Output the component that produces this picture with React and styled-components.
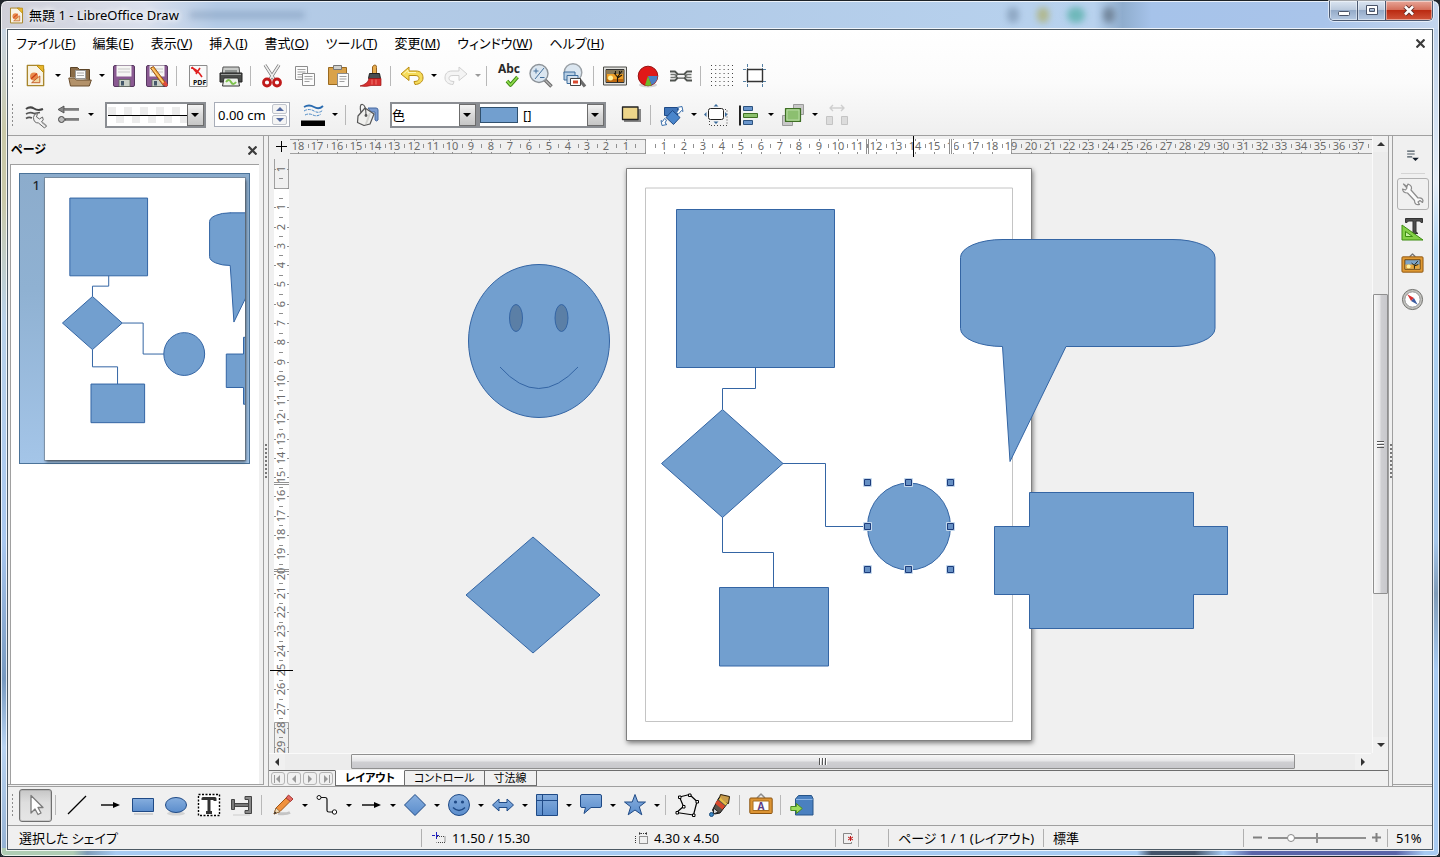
import React from "react";
import styled, { createGlobalStyle, css } from "styled-components";

const GlobalStyle = createGlobalStyle`
  *, *::before, *::after { box-sizing: border-box; }
  html, body { margin: 0; height: 100%; }
  body {
    background: #20262c;
    font-family: "Noto Sans", "Noto Sans CJK JP", sans-serif;
    font-feature-settings: "palt";
    font-size: 13px;
    line-height: 16px;
    color: #000;
    overflow: hidden;
  }
  button, select, input { font: inherit; font-feature-settings: inherit; color: inherit; }
  button { border: 0; padding: 0; background: none; }
  svg { display: block; }
`;

/* ---------- window frame ---------- */

const Frame = styled.div`
  display: flex;
  flex-direction: column;
  height: 100vh;
  padding: 0 6px 6px;
  border: 1px solid #1c2228;
  border-radius: 7px 7px 5px 5px;
  box-shadow: inset 0 0 0 1px rgba(255, 255, 255, 0.75);
  background:
    linear-gradient(90deg, #b0ccb4 0 5%, #7f9cb8 6%, #a7cbf2 8%, #a7cbf2 79%, #44546a 80% 83%, #a7cbf2 85%, #5a64a8 87% 97%, #a7cbf2 99%) bottom / 100% 8px no-repeat,
    linear-gradient(#c8d4e2, #c9c9a8 12%, #c9c9a8 20%, #b9d2ea 34%, #a9c8f0 60%, #7799c0 76%, #b9d4f2 84%, #88a6c8 100%) left 28px / 8px 100% no-repeat,
    linear-gradient(#bcd0ea, #e4edf7 18%, #b0d6f6 26%, #a4c6ea 60%, #7f9cb8 66%, #a8cbf2 75%) right 28px / 8px 100% no-repeat,
    linear-gradient(90deg, #cfcfd8, #d9dfec 10%, #b4cbe6 15%, #b0c9e6 40%, #b8d2ee 76%, #8fadce 78%, #a6c3ea 80%, #a9c4ea 92%, #c4d6ee);
`;

const TitleBar = styled.header`
  display: flex;
  align-items: center;
  height: 28px;
  flex: none;
  padding-left: 1px;
`;

const Title = styled.h1`
  margin: 0 10px 0 4px;
  font-size: 13px;
  font-weight: 400;
  text-shadow: 0 0 6px #fff, 0 0 6px #fff;
`;

const Blob = styled.span`
  width: ${(p) => p.$w}px;
  height: ${(p) => p.$h || 16}px;
  margin-right: 18px;
  border-radius: 8px;
  filter: blur(3px);
  background: ${(p) => p.$c};
`;

const Fill = styled.span`
  flex: 1;
`;

const Caption = styled.div`
  display: flex;
  align-self: flex-start;
  margin-left: 196px;
  height: 20px;
  border: 1px solid #4a5870;
  border-top: 0;
  border-radius: 0 0 5px 5px;
  box-shadow: 0 0 0 1px rgba(255, 255, 255, 0.6);
  overflow: hidden;
`;

const CaptionButton = styled.button`
  display: grid;
  place-items: center;
  width: ${(p) => (p.$close ? 46 : 28)}px;
  border-right: 1px solid #4a5870;
  box-shadow: inset 0 0 0 1px rgba(255, 255, 255, 0.45);
  background: ${(p) =>
    p.$close
      ? "linear-gradient(#e8a698, #d4705c 45%, #bb2b12 50%, #d0543a)"
      : "linear-gradient(#dbe5f1, #bccbde 45%, #95abc8 50%, #b5c9e2)"};
  &:last-child { border-right: 0; }
`;

const Client = styled.div`
  display: flex;
  flex-direction: column;
  flex: 1;
  min-height: 0;
  border: 1px solid #4c5964;
  outline: 1px solid rgba(255, 255, 255, 0.8);
  background: #f0f0f0;
`;

const TopBars = styled.div`
  flex: none;
  height: 106px;
  background: linear-gradient(#fff, #fbfbfb 50%, #efefef);
  border-bottom: 1px solid #a0a0a0;
`;

const MenuBar = styled.nav`
  display: flex;
  align-items: center;
  height: 26px;
  padding: 0 6px 0 8px;
  gap: 17px;
`;

const MenuItem = styled.button`
  white-space: nowrap;
`;

const CloseButton = styled.button`
  display: grid;
  place-items: center;
  width: 12px;
  height: 16px;
  margin-left: auto;
`;

/* ---------- toolbars ---------- */

const Toolbar = styled.div`
  display: flex;
  align-items: center;
  flex: none;
  height: 39px;
  padding-left: 3px;
  ${(p) => p.$line && css`padding-bottom: 2px; border-bottom: 1px solid #a0a0a0;`}
`;

const Grip = styled.span`
  width: 3px;
  height: 22px;
  margin-right: 5px;
  background: repeating-linear-gradient(#8c8c8c 0 2px, transparent 2px 4px) 1px 0 / 1px 100% no-repeat;
`;

const ToolButton = styled.button`
  display: grid;
  place-items: center;
  flex: none;
  width: 33px;
  height: 33px;
  ${(p) =>
    p.$on &&
    css`
      border: 1px solid #6f6f6f;
      border-radius: 3px;
      background: linear-gradient(#c6c6c6, #dedede 40%, #e6e6e6);
      box-shadow: inset 0 0 0 1px rgba(120, 120, 120, 0.25);
    `}
`;

const ArrowButton = styled.button`
  display: grid;
  place-items: center;
  width: 11px;
  height: 33px;
  &::after {
    content: "";
    border: 3px solid transparent;
    border-top-color: ${(p) => (p.$off ? "#9a9a9a" : "#000")};
    border-bottom: 0;
  }
`;

const Divider = styled.span`
  width: 1px;
  height: 20px;
  margin: 0 4px 0 3px;
  background: #b8b8b8;
`;

const Combo = styled.label`
  display: grid;
  grid-template-columns: 1fr 17px;
  align-items: stretch;
  width: ${(p) => p.$w}px;
  height: 26px;
  border: 2px solid #8a8d92;
  background: #fff;
  position: relative;
  &::after {
    content: "";
    border: 1px solid #6c6c6c;
    background: linear-gradient(#f4f4f4, #d8d8d8 50%, #c6c6c6);
  }
`;

const ComboArrow = styled.i`
  position: absolute;
  right: 5px;
  top: 9px;
  border: 4px solid transparent;
  border-top-color: #000;
  border-bottom: 0;
  pointer-events: none;
`;

const ComboValue = styled.span`
  display: flex;
  align-items: center;
  min-width: 0;
`;

const Select = styled.select`
  appearance: none;
  flex: 1;
  min-width: 0;
  height: 22px;
  padding: 0 0 0 ${(p) => p.$pad || 0}px;
  border: 0;
  outline: 0;
  background: transparent;
`;

const Swatch = styled.i`
  width: 38px;
  height: 16px;
  border: 1px solid #30506e;
  background: #729fcf;
`;

const LinePreview = styled.i`
  flex: 1;
  height: 16px;
  margin-left: 1px;
  background:
    linear-gradient(#000 0 0) 0 8px / 100% 1px no-repeat,
    conic-gradient(#fff 25%, #ececec 0 50%, #fff 0 75%, #ececec 0) 0 0 / 16px 16px;
`;

const HiddenSelect = styled.select`
  position: absolute;
  inset: 0;
  width: 100%;
  opacity: 0;
`;

const Spin = styled.label`
  display: flex;
  align-items: center;
  width: 76px;
  height: 25px;
  margin-left: 8px;
  border: 1px solid #a8adb8;
  background: #fff;
`;

const SpinInput = styled.input`
  width: 57px;
  padding: 0 0 0 3px;
  border: 0;
  outline: 0;
  background: none;
`;

const SpinButtons = styled.span`
  display: flex;
  flex-direction: column;
  gap: 1px;
`;

const SpinButton = styled.button`
  display: grid;
  place-items: center;
  width: 15px;
  height: 10px;
  border: 1px solid #c0c4cc;
  border-radius: 2px;
  background: #f4f4f4;
`;

const Gap = styled.span`
  width: ${(p) => p.$w}px;
  flex: none;
`;

/* ---------- main area ---------- */

const Main = styled.main`
  display: flex;
  flex: 1;
  min-height: 0;
  border-bottom: 1px solid #a0a0a0;
`;

const PagesPanel = styled.aside`
  display: flex;
  flex-direction: column;
  width: 256px;
  flex: none;
  border-right: 1px solid #a0a0a0;
  border-bottom: 1px solid #a0a0a0;
  margin-bottom: 1px;
`;

const PanelHeader = styled.div`
  display: flex;
  align-items: center;
  height: 28px;
  padding: 0 5px 0 3px;
`;

const PanelTitle = styled.h2`
  margin: 0;
  font-size: 12px;
  font-weight: 700;
`;

const PageList = styled.div`
  flex: 1;
  margin: 0 4px 0 2px;
  padding: 8px 8px 0;
  border: solid #a0a0a0;
  border-width: 1px 0 0 1px;
  background: #fff;
`;

const PageItem = styled.button`
  display: flex;
  align-items: flex-start;
  width: 231px;
  height: 291px;
  padding: 4px 4px 3px 3px;
  border: 1px solid #4b7399;
  background: linear-gradient(#8caccc, #8fb1d2 40%, #a4c5e8);
  line-height: 14px;
`;

const PageNumber = styled.span`
  width: 22px;
  padding-right: 5px;
  text-align: right;
  font-weight: 500;
  color: #23282d;
`;

const Thumb = styled.svg`
  flex: 1;
  height: 282px;
  background: #fff;
  box-shadow: 0 0 0 1px rgba(90, 90, 90, 0.35), 1px 2px 3px rgba(0, 0, 0, 0.55);
`;

const Splitter = styled.div`
  display: grid;
  place-items: center;
  width: 5px;
  flex: none;
  border-right: 1px solid #a0a0a0;
  border-left: ${(p) => (p.$edge ? "1px solid #a0a0a0" : "0")};
`;

const SplitGrip = styled.i`
  width: 2px;
  height: 34px;
  background: repeating-linear-gradient(#777 0 2px, transparent 2px 4px);
`;

const Editor = styled.section`
  display: flex;
  flex-direction: column;
  flex: 1;
  min-width: 0;
`;

const Workspace = styled.div`
  display: grid;
  grid-template-columns: 21px minmax(0, 1fr) 16px;
  grid-template-rows: 18px minmax(0, 1fr);
  flex: 1;
  min-height: 0;
`;

const Surface = styled.svg`
  width: 100%;
  height: 100%;
`;

const VScroll = styled.div`
  grid-area: 1 / 3 / 3 / 4;
  display: flex;
  flex-direction: column;
  border-left: 1px solid #fafafa;
  background: #f0f0f0;
`;

const HScroll = styled.div`
  display: flex;
  flex: none;
  height: 17px;
  margin-right: 17px;
  border-top: 1px solid #fafafa;
`;

const ScrollArrow = styled.button`
  display: grid;
  place-items: center;
  flex: none;
  width: 16px;
  height: 16px;
`;

const Track = styled.div`
  display: flex;
  flex: 1;
  flex-direction: ${(p) => (p.$v ? "column" : "row")};
  background: #ececec;
`;

const ScrollThumb = styled.div`
  display: grid;
  place-items: center;
  border: 1px solid #8f8f8f;
  border-radius: 1px;
  ${(p) =>
    p.$v
      ? css`
          flex: 300;
          width: 15px;
          background: linear-gradient(90deg, #f7f7f7, #e6e6e8 45%, #cfcfd2 55%, #c8c8cc);
        `
      : css`
          flex: 943;
          height: 15px;
          background: linear-gradient(#f7f7f7, #e6e6e8 45%, #cfcfd2 55%, #c8c8cc);
        `}
`;

const Space = styled.span`
  flex: ${(p) => p.$f};
`;

const Ridges = styled.i`
  width: ${(p) => (p.$v ? 7 : 8)}px;
  height: 7px;
  background: repeating-linear-gradient(${(p) => (p.$v ? "180deg" : "90deg")}, #555 0 1px, #fff 1px 2px, transparent 2px 3px);
`;

const TabStrip = styled.div`
  display: flex;
  flex: none;
  height: 16px;
  padding-left: 2px;
  border-top: 1px solid #6e6e6e;
`;

const NavButton = styled.button`
  display: grid;
  place-items: center;
  width: 14px;
  height: 13px;
  margin: 1px 2px 0 0;
  border: 1px solid #b4b4b4;
  border-radius: 3px;
`;

const Tab = styled.button`
  padding: 0 9px;
  height: 16px;
  margin-top: -1px;
  font-size: 11px;
  line-height: 14px;
  border: 1px solid #6e6e6e;
  border-left-width: ${(p) => (p.$on ? 1 : 0)}px;
  ${(p) =>
    p.$on &&
    css`
      background: #fff;
      border-top-color: #fff;
      font-weight: 700;
    `}
`;

const Sidebar = styled.aside`
  display: flex;
  flex-direction: column;
  align-items: center;
  width: 39px;
  flex: none;
  padding-top: 2px;
  border-bottom: 1px solid #a0a0a0;
  margin-bottom: 1px;
`;

const SideButton = styled.button`
  display: grid;
  place-items: center;
  width: 32px;
  height: 32px;
  margin-bottom: 3px;
  ${(p) => p.$on && css`border: 1px solid #b0b0b0; border-radius: 3px;`}
`;

const SideRule = styled.i`
  width: 24px;
  height: 1px;
  margin: 0 0 4px;
  background: #d4d4d4;
`;

/* ---------- status bar ---------- */

const StatusBar = styled.footer`
  display: grid;
  grid-template-columns: 414px 414px 23px 30px 155px minmax(0, 1fr) 144px 44px;
  align-items: center;
  flex: none;
  height: 23px;
`;

const Cell = styled.div`
  display: flex;
  align-items: center;
  gap: 6px;
  height: 18px;
  padding-left: ${(p) => p.$pad || 0}px;
  border-right: 1px solid #b0b0b0;
  white-space: nowrap;
  &:last-child { border-right: 0; }
`;

const ZoomTrack = styled.span`
  display: flex;
  align-items: center;
  width: 98px;
  height: 14px;
  background:
    linear-gradient(#909090 0 0) 0 6px / 100% 2px no-repeat,
    linear-gradient(#909090 0 0) 48px 2px / 2px 10px no-repeat;
`;

const ZoomSlider = styled.input`
  appearance: none;
  width: 98px;
  height: 14px;
  margin: 0;
  background: transparent;
  &::-webkit-slider-thumb {
    appearance: none;
    width: 8px;
    height: 8px;
    border: 1px solid #888;
    border-radius: 50%;
    background: #fff;
  }
`;

const ZoomButton = styled.button`
  display: grid;
  place-items: center;
  width: 9px;
  height: 14px;
`;

/* ---------- icons ---------- */

const IconSvg = styled.svg`
  overflow: visible;
`;

const Svg = ({ s = 24, children }) => (
  <IconSvg width={s} height={s} viewBox="0 0 24 24" fill="none" strokeLinejoin="round" aria-hidden="true">
    {children}
  </IconSvg>
);

const BLUE = "#5b8dcc";
const EDGE = "#1f4a86";

const Cross = () => (
  <svg width="9" height="9" viewBox="0 0 9 9" stroke="#3c3c3c" strokeWidth="2.2" aria-hidden="true">
    <path d="M.5.5l8 8M8.5.5l-8 8" />
  </svg>
);

const DrawDoc = ({ s }) => (
  <Svg s={s}>
    <path d="M3.5 1.500H16l4.500 4V22.500h-17z" fill="#f8f3e4" stroke="#a8862c" strokeWidth="1.400" />
    <path d="M13 1.500h7.500v7.500z" fill="#e8b62c" stroke="#b58a14" />
    <circle cx="10.500" cy="13" r="4.200" fill="#e88a4a" />
    <path d="M8 19.500l8.500-7v7z" fill="#f2d7a0" stroke="#c0501c" strokeWidth=".9" />
    <path d="M7.500 15.500l6-5.500" stroke="#c83c14" strokeWidth="1.400" />
  </Svg>
);

const Floppy = ({ children }) => (
  <Svg>
    <rect x="1.500" y="1.500" width="21" height="21" rx="1.500" fill="#8a5a92" stroke="#573860" />
    <path d="M4.500 1.500h15v11h-15z" fill="#f6f6f4" />
    <path d="M6 5h12M6 8h12" stroke="#c8c8c8" />
    <path d="M7 15.500h11v7H7z" fill="#c9cfc6" stroke="#5a6458" strokeWidth=".8" />
    <path d="M9 17h3v4.500H9z" fill="#45586a" />
    {children}
  </Svg>
);

const icons = {
  doc: <DrawDoc s={23} />,
  open: (
    <Svg>
      <path d="M2.500 13V3.500h7l2 2h10V16" fill="#8a6c48" stroke="#5b4428" />
      <path d="M7.500 6.500h10v8h-10z" fill="#fafafa" stroke="#999" />
      <path d="M9 9h7M9 11.500h7" stroke="#aaa" />
      <path d="M.8 14h5.500l2 2h15l-2 6H2.500z" fill="#b3926a" stroke="#6a4e2e" />
    </Svg>
  ),
  save: <Floppy />,
  saveas: (
    <Floppy>
      <path d="M5.500 4l3-1.500L20 18l1.500 4-4-1.500z" fill="#f3a83c" stroke="#8a4a10" strokeWidth=".9" />
      <path d="M7 4l12.500 16" stroke="#ffd890" />
      <path d="M17.500 19.500l3-2.500 2.500 4-2 2z" fill="#e04a3c" />
    </Floppy>
  ),
  pdf: (
    <Svg>
      <path d="M3.500 1.500H21v21H3.500z" fill="#fafafa" stroke="#8c8c8c" />
      <path d="M5 4c3 0 7 3 11 9M6 3l5 6M10 10l4-6" stroke="#e02020" strokeWidth="1.600" />
      <text x="7" y="21" fontSize="7" fontWeight="700" fill="#111" fontFamily="Noto Sans">PDF</text>
    </Svg>
  ),
  print: (
    <Svg>
      <path d="M4 3h16l1 8H3z" fill="#c8cac8" stroke="#555" />
      <path d="M6 6h12v3H6z" fill="#8e9290" />
      <path d="M1 9h22v9H1z" fill="#4a4c4a" stroke="#222" />
      <path d="M2 10.500h20" stroke="#9a9c9a" />
      <path d="M5 14h14l1.500 8h-17z" fill="#eef2ec" stroke="#333" />
      <path d="M7 18q3-4 5 0t5 0" stroke="#7cc24c" strokeWidth="2" />
    </Svg>
  ),
  cut: (
    <Svg>
      <path d="M5 1l9 14M19 1l-9 14" stroke="#777" strokeWidth="3.200" />
      <path d="M5 1l9 14M19 1l-9 14" stroke="#eee" strokeWidth="1.600" />
      <circle cx="7" cy="18.500" r="3.500" stroke="#c01a1a" strokeWidth="2.800" />
      <circle cx="17" cy="18.500" r="3.500" stroke="#c01a1a" strokeWidth="2.800" />
    </Svg>
  ),
  copy: (
    <Svg>
      <path d="M2.500 2.500h12v13h-12z" fill="#fcfcfc" stroke="#8c8c8c" />
      <path d="M4.500 5.500h8M4.500 8h8M4.500 10.500h6M4.500 13h6" stroke="#a0a0a0" />
      <path d="M9.500 9.500h12v12h-12z" fill="#fcfcfc" stroke="#8c8c8c" />
      <path d="M11.500 12.500h8M11.500 15h8M11.500 17.500h5" stroke="#a0a0a0" />
    </Svg>
  ),
  paste: (
    <Svg>
      <path d="M2.500 3.500h18v17h-18z" fill="#d9a24a" stroke="#9a6a20" />
      <path d="M7.500 1.500h8v4h-8z" fill="#d0d0cc" stroke="#777" />
      <path d="M11.500 9.500h11v13h-11z" fill="#fcfcfc" stroke="#8c8c8c" />
      <path d="M13.500 12.500h7M13.500 15h7M13.500 17.500h5" stroke="#a0a0a0" />
    </Svg>
  ),
  brush: (
    <Svg>
      <path d="M14.500 1.500q3-1.500 3 2V10h-4V3z" fill="#e8ae50" stroke="#94601c" />
      <path d="M10.500 9.500h10l1 5h-12z" fill="#4a4e52" stroke="#222" />
      <path d="M10 14.500h12v7H12q-5 1.500-11 .5 8-2 9-7.500z" fill="#d83030" stroke="#9c1414" strokeWidth=".7" />
      <path d="M13 15.500v5M17 15.500v5" stroke="#f07a70" />
    </Svg>
  ),
  undo: (
    <Svg>
      <path d="M1 10l8-7v4h7c5 0 7 3 7 7s-4 6.500-8 6.500l-1-3c3 0 5-1 5-3s-1-3-4-3H9v5z" fill="#f5dc5c" stroke="#b98a10" />
      <path d="M3.500 10L8 6v2.500h8" stroke="#fff6b8" />
    </Svg>
  ),
  redo: (
    <Svg>
      <path d="M23 10l-8-7v4H8c-5 0-7 3-7 7s4 6.500 8 6.500l1-3c-3 0-5-1-5-3s1-3 4-3h6v5z" fill="#f4f4f4" stroke="#d0d0d0" />
    </Svg>
  ),
  abc: (
    <Svg>
      <text x="13" y="9" textAnchor="middle" fontSize="12" fontWeight="700" fill="#2a2a2a" fontFamily="Noto Sans">Abc</text>
      <path d="M11 17l3.500 4 7-8" stroke="#3f8a14" strokeWidth="3.600" />
      <path d="M11 17l3.500 4 7-8" stroke="#8fdb4c" strokeWidth="1.800" />
    </Svg>
  ),
  zoom: (
    <Svg>
      <path d="M16 16l6.500 6.500" stroke="#6c6c6c" strokeWidth="3.600" />
      <path d="M16.500 16.500l5.500 5.500" stroke="#b8b8b8" strokeWidth="1.200" />
      <circle cx="10" cy="9.500" r="9" fill="#dbe6f0" stroke="#8c9298" strokeWidth="1.400" />
      <path d="M6 15l9-11M4.500 7h5M7 4.500v5M11 13.500h4.500" stroke="#44709c" />
    </Svg>
  ),
  zoomPage: (
    <Svg>
      <path d="M17 15l6 7.500" stroke="#6c6c6c" strokeWidth="3.200" />
      <circle cx="11" cy="8.500" r="8.800" fill="#dbe6f0" stroke="#9aa0a6" strokeWidth="1.400" />
      <path d="M2 8h11v8H2z" stroke="#3c6c9c" fill="#b8cfe4" />
      <path d="M5 11.500h11v8H5z" fill="#d4e0ec" stroke="#3c6c9c" />
      <path d="M8.500 14.500h10v7h-10z" fill="#fff" stroke="#444" />
      <path d="M11 16.500h5v3h-5z" fill="#d84a30" />
    </Svg>
  ),
  image: (
    <Svg>
      <path d="M.5 3h23v18H.5z" fill="#e2e2de" stroke="#4c4c48" />
      <path d="M3 5.500h18v13H3z" fill="#f0a028" stroke="#333" />
      <path d="M3.500 6h17v4h-17z" fill="#8a7a58" />
      <path d="M4 15h16v3H4z" fill="#c06a10" />
      <circle cx="7.500" cy="14" r="2.500" fill="#fff2a0" />
      <path d="M14.500 18V13l-3.500-4M14.500 13l4.500-6M14.500 14l4.500-3M12.500 10V7M16.500 10V7" stroke="#201808" strokeWidth="1.100" />
    </Svg>
  ),
  chart: (
    <Svg>
      <ellipse cx="12" cy="21" rx="9" ry="2.500" fill="#bbb" opacity=".6" />
      <circle cx="12" cy="12" r="9.800" fill="#e01818" stroke="#981010" />
      <path d="M12 12h9.600a9.800 9.800 0 0 1-6 9z" fill="#4a80c4" />
      <path d="M12 12l3.500 9.200a9.800 9.800 0 0 1-6.500 0z" fill="#6cbc2c" />
    </Svg>
  ),
  link: (
    <Svg>
      <path d="M1 7.500h5l3 3h6l3-3h5M1 16.500h5l3-3h6l3 3h5" stroke="#505450" strokeWidth="1.800" />
      <path d="M1.500 10.500h4l3 1.500-3 1.500h-4M22.500 10.500h-4l-3 1.500 3 1.500h4" stroke="#707470" strokeWidth="1.400" />
      <rect x="7.500" y="10.500" width="9" height="3.500" rx="1.700" fill="#f4f4f4" stroke="#505450" strokeWidth="1.200" />
    </Svg>
  ),
  grid: (
    <Svg>
      {[2, 6, 10, 14, 18, 22].map((y) => (
        <path key={y} d={`M1 ${y - 0.5}h22`} stroke="#444" strokeDasharray="1 3.200" />
      ))}
    </Svg>
  ),
  guides: (
    <Svg>
      <path d="M4.500 0v24M19.500 0v24M0 5.500h24M0 17.500h24" stroke="#5580a4" strokeDasharray="3 1" />
      <path d="M4.500 5.500h15v12h-15z" fill="#fff" stroke="#333" strokeWidth="1.400" />
    </Svg>
  ),
  lineDialog: (
    <Svg>
      <path d="M2 6q4-3 8-.5t9 .5" stroke="#444" strokeWidth="2" />
      <path d="M2 11q4-2.500 8-.5l6-1M2 15.500q3-2 6-.5" stroke="#555" strokeWidth="1.600" />
      <path d="M9.500 14.500q0-4 4-4l-1 3.500 3 2 3-2q2 3-1 5l5 4-2 2-6-5q-5 0-5-5.500z" fill="#f2f2f2" stroke="#666" />
      <path d="M18.500 19.500l4 3.500" stroke="#999" strokeWidth="1.600" />
    </Svg>
  ),
  arrowStyle: (
    <Svg>
      <path d="M5 6.500h17M8 16.500h14" stroke="#555" strokeWidth="2.400" />
      <path d="M1 6.500l6-3.500v7z" fill="#888" stroke="#444" strokeWidth=".8" />
      <circle cx="4.500" cy="16.500" r="3" fill="#bbb" stroke="#444" />
      <path d="M7 7h15M9 17h13" stroke="#bbb" strokeWidth=".8" />
    </Svg>
  ),
  lineColor: (
    <Svg>
      <path d="M3 4q5-3 10 0t9-1" stroke="#2b6cb0" strokeWidth="1.800" />
      <path d="M3 8q5-3 10 0t9-1M4 12q4-2 8 0t8-1" stroke="#4a88c4" strokeDasharray="3 1" />
      <path d="M0 17.500h24V23H0z" fill="#000" />
    </Svg>
  ),
  bucket: (
    <Svg>
      <path d="M13 5h8q2 0 2 2v10q-1.500 2-3 0V9h-4z" fill="#7c9cd0" stroke="#4468a0" />
      <path d="M3 13L10 5l9 6-4 10-6 1.500-6.500-3z" fill="#f0f0ee" stroke="#555" strokeWidth="1.200" />
      <path d="M15 10l-4 11" stroke="#d4d4d0" strokeWidth="2" />
      <path d="M6 9.500Q4 1 7.500 1.500T11 12" stroke="#555" strokeWidth="1.200" />
      <circle cx="11" cy="12.500" r="1.400" fill="#555" />
    </Svg>
  ),
  shadow: (
    <Svg>
      <path d="M5 6h17v13H5z" fill="#555" opacity=".7" />
      <path d="M3.500 4h15.500v12.500H3.500z" fill="#edd58a" stroke="#222" strokeWidth="1.300" />
    </Svg>
  ),
  transform: (
    <Svg>
      <path d="M4.500 4.500h13v8h-13z" fill="#3f74b8" stroke={EDGE} />
      <path d="M12.500 7.500l7.500 7-6.500 7-7.500-7z" fill="#4a86cc" stroke={EDGE} />
      <path d="M17 4.500l5-1 1 5-1.500-1-3 3.500-2-1.500 2.500-3.500z" fill="#fff" stroke="#3c70ac" />
      <path d="M7 21.500l-5 1-1-5 1.500 1 2-3 2 1.500-1.500 3z" fill="#fff" stroke="#3c70ac" />
    </Svg>
  ),
  position: (
    <Svg>
      <path d="M6 6.500h17v16H5.500V18" stroke="#444" strokeDasharray="1 2" />
      <rect x="4.500" y="5.500" width="15" height="11" rx="2" fill="#fff" stroke="#222" />
      <path d="M9.500 3.500L12 1l2.500 2.500zM9.500 18.500L12 21l2.500-2.500zM2.500 9L0 11.500 2.500 14zM21 9l2.500 2.500L21 14z" fill="#3c6c9c" />
    </Svg>
  ),
  align: (
    <Svg>
      <path d="M3 2.500v20" stroke="#222" strokeWidth="2" />
      <path d="M6.500 3.500h9v4h-9zM6.500 17.500h9v4h-9z" fill="#6a96cc" stroke="#2c527e" />
      <path d="M6.500 10.500h14v4h-14z" fill="#8cc06c" stroke="#3e6e24" />
    </Svg>
  ),
  arrange: (
    <Svg>
      <path d="M12.500 1.500h10v10h-10zM1.500 12.500h10v10h-10z" fill="#c8c8c8" stroke="#9a9a9a" />
      <path d="M4.500 5.500h15v13h-15z" fill="#8cbf70" stroke="#3e6e24" strokeWidth="1.200" />
      <path d="M6 7h12v10H6z" stroke="#b8dca4" />
    </Svg>
  ),
  distribute: (
    <Svg>
      <path d="M5 5h14M8 2L5 5l3 3M16 2l3 3-3 3" stroke="#cfcfcf" strokeWidth="1.400" />
      <path d="M1.500 13.500h6v8h-6zM16.500 13.500h6v8h-6z" fill="#dcdcdc" stroke="#c4c4c4" />
    </Svg>
  ),
  pointer: (
    <Svg>
      <path d="M7 2.500l12 12h-5l3 5.500-3 1.500-3-5.500-4 4z" fill="#fff" stroke="#7c7c7c" strokeWidth="1.300" />
    </Svg>
  ),
  line: <Svg><path d="M3 21L21 3" stroke="#000" strokeWidth="1.200" /></Svg>,
  arrow: (
    <Svg>
      <path d="M3 12h16" stroke="#000" strokeWidth="1.400" />
      <path d="M15 9l7 3-7 3z" fill="#000" />
    </Svg>
  ),
  rect: (
    <Svg>
      <path d="M3 21h19" stroke="#d4d4d4" strokeWidth="2" />
      <path d="M1.500 5.500h21v13h-21z" fill="url(#blueFill)" stroke={EDGE} />
    </Svg>
  ),
  ellipse: (
    <Svg>
      <ellipse cx="12" cy="20.500" rx="9" ry="2" fill="#d4d4d4" />
      <ellipse cx="12" cy="12" rx="10.500" ry="7.500" fill="url(#blueFill)" stroke={EDGE} />
    </Svg>
  ),
  text: (
    <Svg>
      <path d="M1.500 1.500h21v21h-21z" fill="#fff" stroke="#000" strokeDasharray="2 1.500" strokeWidth="1.400" />
      <path d="M6 7V5.500h12V8M12 6v12.500M9 19.500h6" stroke="#333" strokeWidth="3" />
    </Svg>
  ),
  dimension: (
    <Svg>
      <path d="M1.500 6.500h3v10h-3zM4.500 10.500h14v3h-14z" fill="#777" stroke="#444" />
      <path d="M15 3.500h6.500v17H15v-3h3.500v-11H15z" fill="#888" stroke="#444" />
      <path d="M3 22h17" stroke="#d8d8d8" strokeWidth="1.500" />
    </Svg>
  ),
  pencil: (
    <Svg>
      <path d="M7 20.500q8 1 12-1" stroke="#c4c4c4" strokeWidth="3" />
      <path d="M3 21l2-6L17 3l4 3.500L9 18.500z" fill="#f0913c" stroke="#a05414" />
      <path d="M3 21l2-6 4 3.500z" fill="#f4dcb4" stroke="#7c5c38" strokeWidth=".7" />
      <path d="M15 5l2.500-3 4.500 4-2.500 2.500z" fill="#e46a64" stroke="#a83a34" />
      <path d="M3 21l1-2.500 1.500 1.500z" fill="#222" />
    </Svg>
  ),
  connector: (
    <Svg>
      <path d="M5 4.500h5q2 0 2 2v11q0 1.500 2 1.500h4" stroke="#111" strokeWidth="1.200" />
      <circle cx="4" cy="4.500" r="2" fill="#fff" stroke="#111" />
      <circle cx="19.500" cy="19" r="2.200" fill="#fff" stroke="#111" />
    </Svg>
  ),
  diamond: (
    <Svg>
      <path d="M12 1.500L22.500 12 12 22.500 1.500 12z" fill="url(#blueFill)" stroke={EDGE} />
    </Svg>
  ),
  smiley: (
    <Svg>
      <circle cx="12" cy="12" r="10.500" fill="url(#blueFill)" stroke={EDGE} />
      <circle cx="8.500" cy="9" r="1.600" fill={EDGE} />
      <circle cx="15.500" cy="9" r="1.600" fill={EDGE} />
      <path d="M6 14.500q6 6 12 0" stroke={EDGE} strokeWidth="1.400" />
    </Svg>
  ),
  arrows: (
    <Svg>
      <path d="M1.500 12l6.500-6v3.500h8V6l6.500 6-6.500 6v-3.500H8V18z" fill="url(#blueFill)" stroke={EDGE} />
    </Svg>
  ),
  flow: (
    <Svg>
      <path d="M1.500 1.500h21v21h-21z" fill="url(#blueFill)" stroke={EDGE} />
      <path d="M7.500 1.500v21M1.500 7.500h21" stroke={EDGE} />
    </Svg>
  ),
  callout: (
    <Svg>
      <path d="M3 1.500h18q1.500 0 1.500 1.500v10q0 1.500-1.500 1.500H12l-7 6 1.500-6H3q-1.500 0-1.500-1.500V3q0-1.500 1.500-1.500z" fill="url(#blueFill)" stroke={EDGE} />
    </Svg>
  ),
  star: (
    <Svg>
      <path d="M12 1.500l2.800 7.500h7.700l-6.200 4.800 2.500 8L12 17l-6.800 4.800 2.500-8L1.500 9h7.700z" fill="url(#blueFill)" stroke={EDGE} />
    </Svg>
  ),
  points: (
    <Svg>
      <path d="M4.500 4L14.500 1.500 22 8.500 18.500 22 1.500 19.500 8.500 13.500z" stroke="#000" strokeWidth="1.200" />
      {[[4.5, 4], [14.5, 2], [22, 8.5], [18.5, 22], [2, 19.5], [8.5, 13.5]].map(([x, y]) => (
        <rect key={x + "-" + y} x={x - 1} y={y - 1} width="2.500" height="2.500" fill="#fff" stroke="#000" />
      ))}
    </Svg>
  ),
  glue: (
    <Svg>
      <path d="M12.500 1.500l9 2-1 7-6-1-3-5z" fill="#c89c4c" stroke="#2a1c08" />
      <path d="M11 4.500l8 6.500-7 9-5.500 1-2-4z" fill="#5a544c" stroke="#111" />
      <path d="M9.500 7l7.500 6-2.500 3.500-7.500-6z" fill="#d8482c" />
      <path d="M11.500 5.500l7 6" stroke="#e8c048" strokeWidth="2.400" />
      <path d="M5.500 15l5 4-5 2z" fill="#d8d8d8" stroke="#222" />
      <circle cx="3.500" cy="21.500" r="2" fill="#3c88c4" stroke="#184c7c" />
    </Svg>
  ),
  fontwork: (
    <Svg>
      <path d="M8 5l4-4 4 4" stroke="#8c8c8c" strokeWidth="1.500" />
      <rect x=".8" y="5" width="22.400" height="15.500" rx="1" fill="#dc9434" stroke="#8c5410" />
      <path d="M4 8h16v9.500H4z" fill="#fdfdfd" stroke="#a86c1c" />
      <text x="12" y="16.500" textAnchor="middle" fontSize="10" fontWeight="700" fill="#5c3c84" fontFamily="Noto Sans">A</text>
    </Svg>
  ),
  extrusion: (
    <Svg>
      <path d="M5.500 6l3-3.500h13l1.500 3V22H5.500z" fill="#4a80c0" stroke="#265488" />
      <path d="M6 6.500h16.500" stroke="#8ab4e4" />
      <path d="M.8 13.500h5.500v-3l6 5-6 5v-3H.8z" fill="#9cdc5c" stroke="#4a8c1c" />
    </Svg>
  ),
  sideMenu: (
    <Svg s={20}>
      <path d="M5 8.500h9M5 12h9M5 15.500h6" stroke="#46545f" strokeWidth="1.400" />
      <path d="M11 16.500h8L15 20.500z" fill="#111c28" />
    </Svg>
  ),
  wrench: (
    <Svg>
      <path d="M2.500 2L6 4.500l1-2.500q5 2 3 6l7 8q4-1 5 2.500l-.5 2-2.500-2-2 1.500 1.500 2.500q-5 1-5-4L6.500 11Q2 11 1.500 7l3 1 1.500-2z" fill="#fafafa" stroke="#8c8c8c" strokeWidth="1.200" />
    </Svg>
  ),
  styles: (
    <Svg>
      <path d="M4.500 1.500h17v4h-1.500l-1-1.500h-4V15l2 1.500h-7L12 15V4H7.500L6 5.500H4.500z" fill="#4c4c4c" stroke="#333" />
      <path d="M1 8l21 15H1z" fill="#84d048" stroke="#3c8c10" />
      <path d="M4.500 14.500l7 5h-7z" fill="#c8f0a4" stroke="#3c8c10" />
    </Svg>
  ),
  gallery: (
    <Svg s={23}>
      <path d="M9 4l3-3 3 3" stroke="#777" strokeWidth="1.400" />
      <rect x="1" y="4" width="22" height="16" rx="1" fill="#e09a34" stroke="#8c5410" />
      <path d="M4 7h16v10H4z" fill="#7ca4c8" stroke="#74480c" />
      <path d="M4.500 12h15v4.500h-15z" fill="#e8a83c" />
      <circle cx="8" cy="14" r="2" fill="#fff0a0" />
      <path d="M14 16.500V13l-3-2.500M14 12.500l3.500-4M14 13.500l4-1.500" stroke="#1c1c10" />
    </Svg>
  ),
  compass: (
    <Svg s={23}>
      <circle cx="12" cy="12" r="10.500" fill="#c4c4c0" stroke="#6c6c68" />
      <circle cx="12" cy="12" r="8" fill="#fff" stroke="#909090" />
      <path d="M6.500 6.500l7 4-3 3z" fill="#d83030" />
      <path d="M17.500 17.500l-7-4 3-3z" fill="#3c5ca0" />
    </Svg>
  ),
};

const Tri = ({ dir = "up", c = "#333", bar }) => (
  <svg width="8" height="8" viewBox="0 0 8 8" fill={c} aria-hidden="true">
    <path d={{ up: "M0 6h8L4 2z", down: "M0 2h8L4 6z", left: "M6 0v8L2 4z", right: "M2 0v8l4-4z" }[dir]} />
    {bar && <path d={dir === "left" ? "M0 0h1v8H0z" : "M7 0h1v8H7z"} />}
  </svg>
);

/* ---------- the drawing ---------- */

const Outline = (props) => <path vectorEffect="non-scaling-stroke" {...props} />;

const Shapes = () => (
  <g fill="#729fcf" stroke="#3465a4">
    <Outline d="M676.500 209.500h158v158h-158z" />
    <Outline d="M755.500 367.500v21h-33v21M783 463.500h42.500v63h42M722.500 517v35.500h51v35" fill="none" />
    <Outline d="M722.500 409.500l60.500 54-60.500 54-61-54z" />
    <Outline d="M719.500 587.500h109v78.500h-109z" />
    <ellipse cx="909" cy="526.500" rx="41.500" ry="43.500" vectorEffect="non-scaling-stroke" />
    <ellipse cx="539" cy="341" rx="70.500" ry="76.500" />
    <ellipse cx="516" cy="318" rx="6.500" ry="13.500" fill="#5b7fa6" />
    <ellipse cx="561.500" cy="318" rx="6.500" ry="13.500" fill="#5b7fa6" />
    <path d="M500 367q38.500 43 78 0" fill="none" />
    <path d="M533 537l67 58-67 58-67-58z" />
    <Outline d="M1002 239.500h171a42 18 0 0 1 42 18v71a42 18 0 0 1-42 18h-107l-56 115-7.500-115a42 18 0 0 1-42-18v-71a42 18 0 0 1 42-18z" />
    <Outline d="M1029.500 492.500h164v34h34v68h-34v34h-164v-34h-35v-68h35z" />
  </g>
);

const Canvas = () => (
  <Surface role="img" aria-label="図形描画">
    <defs>
      <linearGradient id="blueFill" x1="0" y1="0" x2="0" y2="1">
        <stop offset="0" stopColor="#86aede" />
        <stop offset="1" stopColor={BLUE} />
      </linearGradient>
      <filter id="pageShadow" x="-5%" y="-5%" width="110%" height="110%">
        <feDropShadow dx="1" dy="2" stdDeviation="2.500" floodOpacity=".5" />
      </filter>
    </defs>
    <g transform="translate(-290 -154)">
      <path d="M913.500 154v3M288 670.500h5" stroke="#000" />
      <path d="M626.500 168.500h405v572h-405z" fill="#fff" stroke="#808080" filter="url(#pageShadow)" />
      <path d="M645.500 188h367v533.500h-367z" fill="none" stroke="#c4c4c4" />
      <Shapes />
      {[482, 526, 569].map((y) =>
        [867, 908, 950].map((x) =>
          x === 908 && y === 526 ? null : (
            <g key={x + "-" + y}>
              <path d={`M${x - 3.5} ${y - 3.5}h8v8h-8z`} fill="none" stroke="#c4d8ec" />
              <path d={`M${x - 2.5} ${y - 2.5}h6v6h-6z`} fill="#6690c4" stroke="#1c3c7c" />
            </g>
          )
        )
      )}
    </g>
  </Surface>
);

const STEP = 19.28;

const Ruler = ({ vertical }) => {
  const zero = vertical ? 188 : 645;
  const [from, to] = vertical ? [-1, 29] : [-18, 37];
  const end = vertical ? 722 : 1011;
  const start = vertical ? 159 : 290;
  const limit = vertical ? 1600 : 2400;
  const marks = [];
  for (let n = from; n <= to; n++) {
    marks.push({ n, at: Math.round(zero + n * STEP), half: Math.round(zero + (n + 0.5) * STEP) });
  }
  return (
    <Surface aria-hidden="true" fontSize="11" fill="#6a6a6a" textAnchor="middle">
      <g transform={vertical ? "translate(-269 -154) matrix(0 1 1 0 135 0)" : "translate(-290 -136)"}>
        <path d={`M${start} 139h${limit - start}v15H${start}z`} fill="#fff" />
        <path d={`M${start} 139.500H${zero + 0.5}v14H${start}`} fill="#f0f0f0" stroke="#a0a0a0" />
        <path d={`M${end + 0.5} 139.500H${limit}v14H${end + 0.5}z`} fill="#f0f0f0" stroke="#a0a0a0" />
        {marks.map(({ n, at, half }) => (
          <path key={n} d={`M${at}.5 139v2M${at}.5 152v2M${half}.5 144v4`} stroke="#909090" />
        ))}
      </g>
      {marks.filter(({ n }) => n !== 0).map(({ n, at }) =>
        vertical ? (
          <text key={n} transform={`translate(16 ${at - 154}) rotate(-90)`}>{Math.abs(n)}</text>
        ) : (
          <text key={n} x={at - 290} y="14">{Math.abs(n)}</text>
        )
      )}
      {vertical ? (
        <g transform="translate(-269 -154)">
          <path d="M274 482.500h15M274 484.500h15M274 569.500h15M274 571.500h15" stroke="#909090" />
          <path d="M270 670.500h20" stroke="#000" />
        </g>
      ) : (
        <g transform="translate(-290 -136)">
          <path d="M950 140h4v13h-4z" fill="#fff" />
          <path d="M866.500 139v15M868.500 139v15M949.500 139v15M951.500 139v15" stroke="#909090" />
          <path d="M913.500 136v18" stroke="#000" />
        </g>
      )}
    </Surface>
  );
};

/* ---------- composition ---------- */

const menus = [
  ["ファイル", "F"], ["編集", "E"], ["表示", "V"], ["挿入", "I"], ["書式", "O"],
  ["ツール", "T"], ["変更", "M"], ["ウィンドウ", "W"], ["ヘルプ", "H"],
];

const standardTools = [
  "doc+", "open+", "save", "saveas", "|", "pdf", "print", "|", "cut", "copy", "paste", "brush", "|",
  "undo+", "redo-", "|", "abc", "zoom", "zoomPage", "|", "image", "chart", "link", "|", "grid", "guides",
];

const drawTools = [
  "pointer*", "|", "line", "arrow", "rect", "ellipse", "text", "dimension", "|", "pencil+", "connector+",
  "arrow+", "diamond+", "smiley+", "arrows+", "flow+", "callout+", "star+", "|", "points", "glue", "|",
  "fontwork", "|", "extrusion",
];

const Tools = ({ items }) =>
  items.map((item, i) => {
    if (item === "|") return <Divider key={i} />;
    const name = item.replace(/[^a-zA-Z]/g, "");
    return (
      <React.Fragment key={i}>
        <ToolButton type="button" aria-label={name} $on={item.endsWith("*")}>{icons[name]}</ToolButton>
        {/[+-]$/.test(item) && <ArrowButton type="button" aria-label={name + " menu"} $off={item.endsWith("-")} />}
      </React.Fragment>
    );
  });

export default function App() {
  return (
    <>
      <GlobalStyle />
      <Frame>
        <TitleBar>
          <DrawDoc s={17} />
          <Title>無題 1 - LibreOffice Draw</Title>
          <Blob $w={116} $h={8} $c="rgba(90, 120, 155, 0.3)" />
          <Fill />
          <Blob $w={12} $c="#8fa8c4" />
          <Blob $w={12} $c="#b0b890" />
          <Blob $w={18} $c="#6fb8ba" />
          <Blob $w={12} $c="#74889e" />
          <Caption>
            <CaptionButton type="button" aria-label="最小化">
              <svg width="14" height="10"><rect x="1.500" y="5.500" width="11" height="4" rx="1" fill="#fff" stroke="#4a5468" /></svg>
            </CaptionButton>
            <CaptionButton type="button" aria-label="最大化">
              <svg width="12" height="11"><path d="M.5.5h11v9H.5zM3.500 3.500v3h5v-3z" fill="#fff" fillRule="evenodd" stroke="#4a5468" /></svg>
            </CaptionButton>
            <CaptionButton type="button" aria-label="閉じる" $close>
              <svg width="14" height="11"><path d="M3 1.500l8 8M11 1.500l-8 8" stroke="#5c2c28" strokeWidth="4.500" /><path d="M3 1.500l8 8M11 1.500l-8 8" stroke="#fff" strokeWidth="2.600" /></svg>
            </CaptionButton>
          </Caption>
        </TitleBar>

        <Client>
          <TopBars>
            <MenuBar aria-label="メニュー">
              {menus.map(([label, key]) => (
                <MenuItem type="button" key={key}>{label}(<u>{key}</u>)</MenuItem>
              ))}
              <CloseButton type="button" aria-label="ドキュメントを閉じる"><Cross /></CloseButton>
            </MenuBar>
            <Toolbar>
              <Grip />
              <Tools items={standardTools} />
            </Toolbar>
            <Toolbar>
              <Grip />
              <ToolButton type="button" aria-label="線">{icons.lineDialog}</ToolButton>
              <ToolButton type="button" aria-label="矢印スタイル">{icons.arrowStyle}</ToolButton>
              <ArrowButton type="button" aria-label="矢印スタイル一覧" />
              <Gap $w={9} />
              <Combo $w={101}>
                <ComboValue><LinePreview /></ComboValue>
                <HiddenSelect aria-label="線のスタイル"><option>実線</option></HiddenSelect>
                <ComboArrow />
              </Combo>
              <Spin>
                <SpinInput aria-label="線幅" defaultValue="0.00 cm" />
                <SpinButtons>
                  <SpinButton type="button" aria-label="増やす"><Tri c="#5068a0" /></SpinButton>
                  <SpinButton type="button" aria-label="減らす"><Tri dir="down" c="#5068a0" /></SpinButton>
                </SpinButtons>
              </Spin>
              <Gap $w={6} />
              <ToolButton type="button" aria-label="線の色">{icons.lineColor}</ToolButton>
              <ArrowButton type="button" aria-label="線の色一覧" />
              <Gap $w={2} />
              <Divider />
              <ToolButton type="button" aria-label="領域">{icons.bucket}</ToolButton>
              <Gap $w={7} />
              <Combo $w={88}>
                <ComboValue><Select aria-label="塗りつぶしの種類"><option>色</option></Select></ComboValue>
                <ComboArrow />
              </Combo>
              <Combo $w={128}>
                <ComboValue><Swatch /><Select aria-label="塗りつぶしの色" $pad={5}><option>[]</option></Select></ComboValue>
                <ComboArrow />
              </Combo>
              <Gap $w={8} />
              <ToolButton type="button" aria-label="影">{icons.shadow}</ToolButton>
              <Divider />
              <ToolButton type="button" aria-label="変換">{icons.transform}</ToolButton>
              <ArrowButton type="button" aria-label="変換一覧" />
              <ToolButton type="button" aria-label="位置とサイズ">{icons.position}</ToolButton>
              <ToolButton type="button" aria-label="配置">{icons.align}</ToolButton>
              <ArrowButton type="button" aria-label="配置一覧" />
              <ToolButton type="button" aria-label="整列">{icons.arrange}</ToolButton>
              <ArrowButton type="button" aria-label="整列一覧" />
              <ToolButton type="button" aria-label="間隔">{icons.distribute}</ToolButton>
            </Toolbar>
          </TopBars>

          <Main>
            <PagesPanel>
              <PanelHeader>
                <PanelTitle>ページ</PanelTitle>
                <CloseButton type="button" aria-label="ページ欄を閉じる"><Cross /></CloseButton>
              </PanelHeader>
              <PageList>
                <PageItem type="button" aria-label="ページ 1">
                  <PageNumber>1</PageNumber>
                  <Thumb>
                    <g transform="translate(-308 -83) scale(.492)"><Shapes /></g>
                  </Thumb>
                </PageItem>
              </PageList>
            </PagesPanel>
            <Splitter><SplitGrip /></Splitter>

            <Editor>
              <Workspace>
                <svg width="21" height="18" aria-hidden="true"><path d="M7 10.500h11M12.500 5v11" stroke="#000" /></svg>
                <Ruler />
                <VScroll>
                  <ScrollArrow type="button" aria-label="上へ"><Tri /></ScrollArrow>
                  <Track $v>
                    <Space $f={142} />
                    <ScrollThumb $v><Ridges $v /></ScrollThumb>
                    <Space $f={143} />
                  </Track>
                  <ScrollArrow type="button" aria-label="下へ"><Tri dir="down" /></ScrollArrow>
                </VScroll>
                <Ruler vertical />
                <Canvas />
              </Workspace>
              <HScroll>
                <ScrollArrow type="button" aria-label="左へ"><Tri dir="left" /></ScrollArrow>
                <Track>
                  <Space $f={66} />
                  <ScrollThumb><Ridges /></ScrollThumb>
                  <Space $f={60} />
                </Track>
                <ScrollArrow type="button" aria-label="右へ"><Tri dir="right" /></ScrollArrow>
              </HScroll>
              <TabStrip>
                <NavButton type="button" aria-label="先頭"><Tri dir="left" c="#999" bar /></NavButton>
                <NavButton type="button" aria-label="前"><Tri dir="left" c="#999" /></NavButton>
                <NavButton type="button" aria-label="次"><Tri dir="right" c="#999" /></NavButton>
                <NavButton type="button" aria-label="末尾"><Tri dir="right" c="#999" bar /></NavButton>
                <Tab type="button" $on>レイアウト</Tab>
                <Tab type="button">コントロール</Tab>
                <Tab type="button">寸法線</Tab>
              </TabStrip>
            </Editor>

            <Splitter $edge><SplitGrip /></Splitter>
            <Sidebar>
              <SideButton type="button" aria-label="サイドバーの設定">{icons.sideMenu}</SideButton>
              <SideRule />
              <SideButton type="button" aria-label="プロパティ" $on>{icons.wrench}</SideButton>
              <SideButton type="button" aria-label="スタイル">{icons.styles}</SideButton>
              <SideButton type="button" aria-label="ギャラリー">{icons.gallery}</SideButton>
              <SideButton type="button" aria-label="ナビゲーター">{icons.compass}</SideButton>
            </Sidebar>
          </Main>

          <Toolbar $line>
            <Grip />
            <Tools items={drawTools} />
          </Toolbar>

          <StatusBar>
            <Cell $pad={11}>選択した シェイプ</Cell>
            <Cell $pad={10}>
              <svg width="14" height="12" aria-hidden="true">
                <path d="M4.500 0v8M0 3.500h8" stroke="#2020c0" strokeDasharray="3 1" />
                <path d="M5 4.500h8v6H4.500" fill="none" stroke="#444" strokeDasharray="1 1" />
              </svg>
              11.50 / 15.30
              <Gap $w={92} />
              <svg width="14" height="12" aria-hidden="true">
                <path d="M5.500 4.500h8v7h-8zM1.500 4v8M5 1.500h8" fill="none" stroke="#333" strokeDasharray="1 1" />
                <path d="M5 0l2 1.500L5 3zM13 0l-2 1.500 2 1.500z" fill="#333" />
              </svg>
              4.30 x 4.50
            </Cell>
            <Cell $pad={6}>
              <svg width="12" height="12" aria-hidden="true">
                <path d="M9.500 3V1.500h-8v10h8V10" fill="none" stroke="#888" />
                <path d="M8.500 4v5M6 5l5 3M11 5L6 8" stroke="#c01818" />
              </svg>
            </Cell>
            <Cell />
            <Cell $pad={9}>ページ 1 / 1 (レイアウト)</Cell>
            <Cell $pad={9}>標準</Cell>
            <Cell $pad={9}>
              <ZoomButton type="button" aria-label="縮小"><svg width="9" height="9"><path d="M0 4.500h9" stroke="#808080" strokeWidth="2" /></svg></ZoomButton>
              <ZoomTrack><ZoomSlider type="range" aria-label="ズーム" min="0" max="100" defaultValue="21" /></ZoomTrack>
              <ZoomButton type="button" aria-label="拡大"><svg width="9" height="9"><path d="M0 4.500h9M4.500 0v9" stroke="#808080" strokeWidth="2" /></svg></ZoomButton>
            </Cell>
            <Cell $pad={8}>51%</Cell>
          </StatusBar>
        </Client>
      </Frame>
    </>
  );
}
